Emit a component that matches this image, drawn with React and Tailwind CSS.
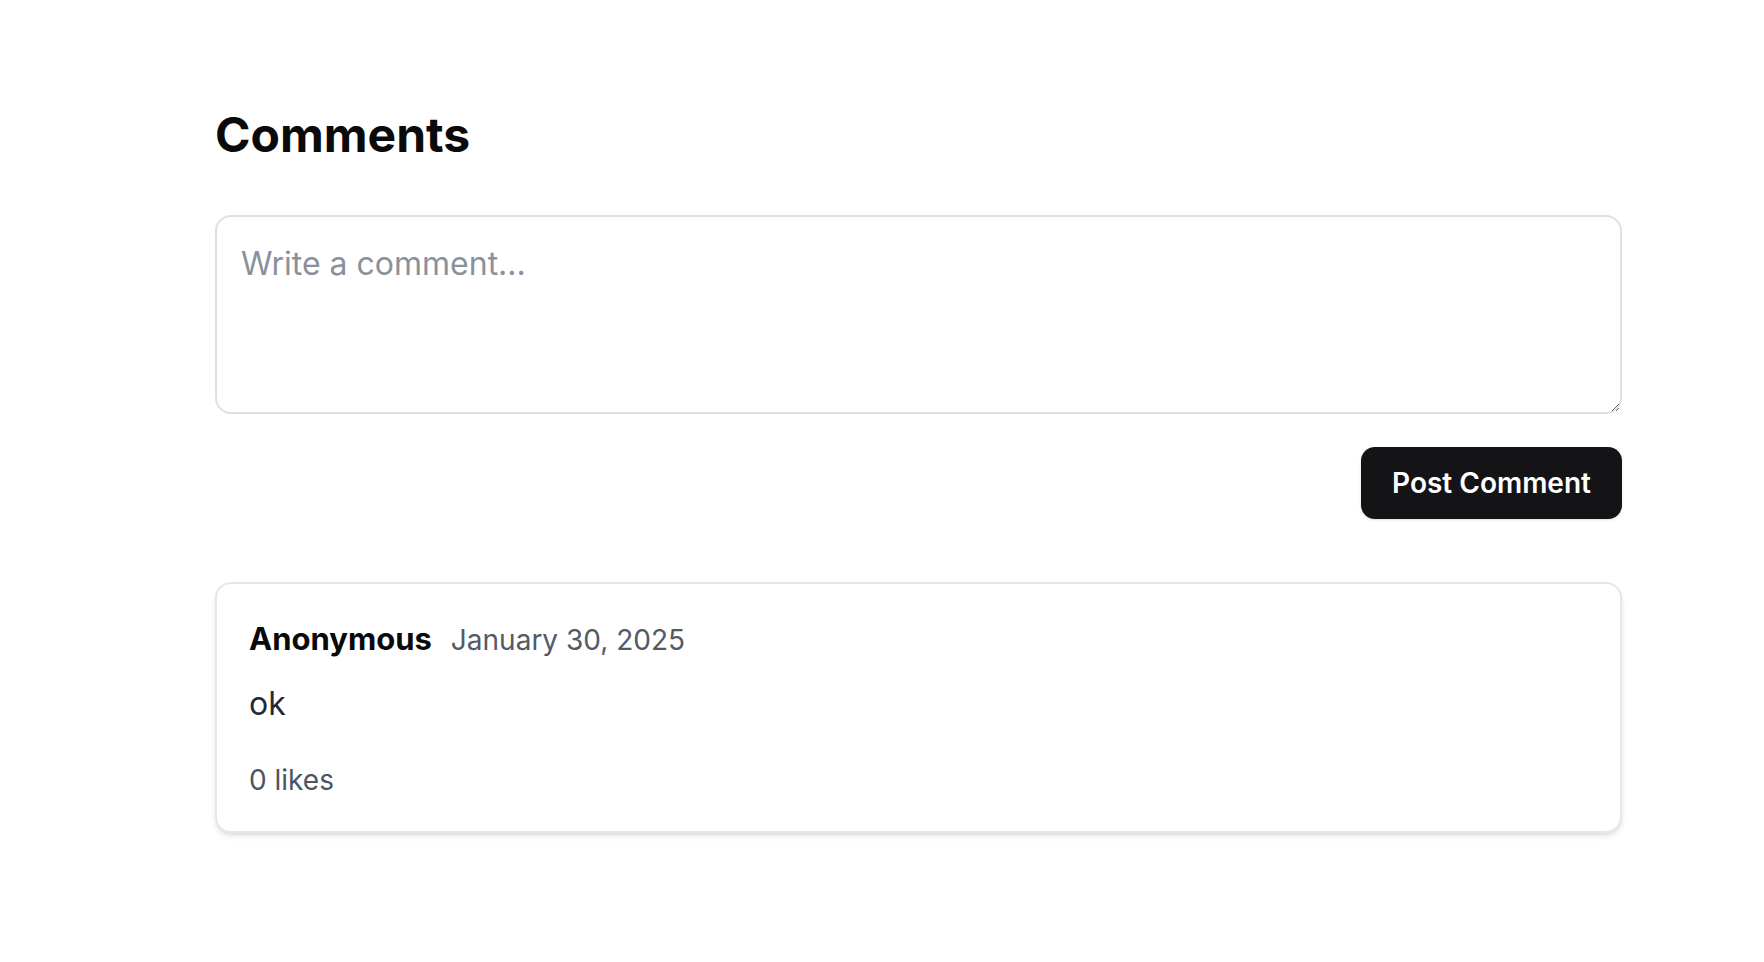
export default function App() {
  return (
    <div className="min-h-screen bg-white" style={{ fontFamily: "Inter, 'Noto Sans', sans-serif" }}>
      <div className="pl-[215px] pr-[142px] pt-[104px]">
        <h1 className="text-[48px] leading-[62px] font-bold text-[#0a0a0a]">Comments</h1>
        <div className="mt-[49px]">
          <textarea
            placeholder="Write a comment..."
            className="block w-full h-[199px] rounded-[16px] border-2 border-[#dfe0e4] px-[24px] py-[25px] text-[32px] leading-[44px] text-[#111827] placeholder:text-[#8a919d] outline-none resize-y"
          />
        </div>
        <div className="mt-[33px] flex justify-end">
          <button className="h-[72px] w-[261px] rounded-[14px] bg-[#141416] text-white text-[28px] font-semibold shadow-sm">
            Post Comment
          </button>
        </div>
        <div className="mt-[63px] rounded-[16px] border-2 border-[#e5e7eb] bg-white px-[32px] pt-[33px] pb-[31px] shadow-md">
          <div className="flex items-baseline gap-[19px]">
            <span className="text-[31px] leading-[44px] font-bold text-[#0a0a0a]">Anonymous</span>
            <span className="text-[28px] leading-[44px] text-[#525a68]">January 30, 2025</span>
          </div>
          <p className="mt-[20px] text-[32px] leading-[44px] text-[#1f2937]">ok</p>
          <p className="mt-[34px] text-[28px] leading-[40px] text-[#4b5563]">0 likes</p>
        </div>
      </div>
    </div>
  );
}
